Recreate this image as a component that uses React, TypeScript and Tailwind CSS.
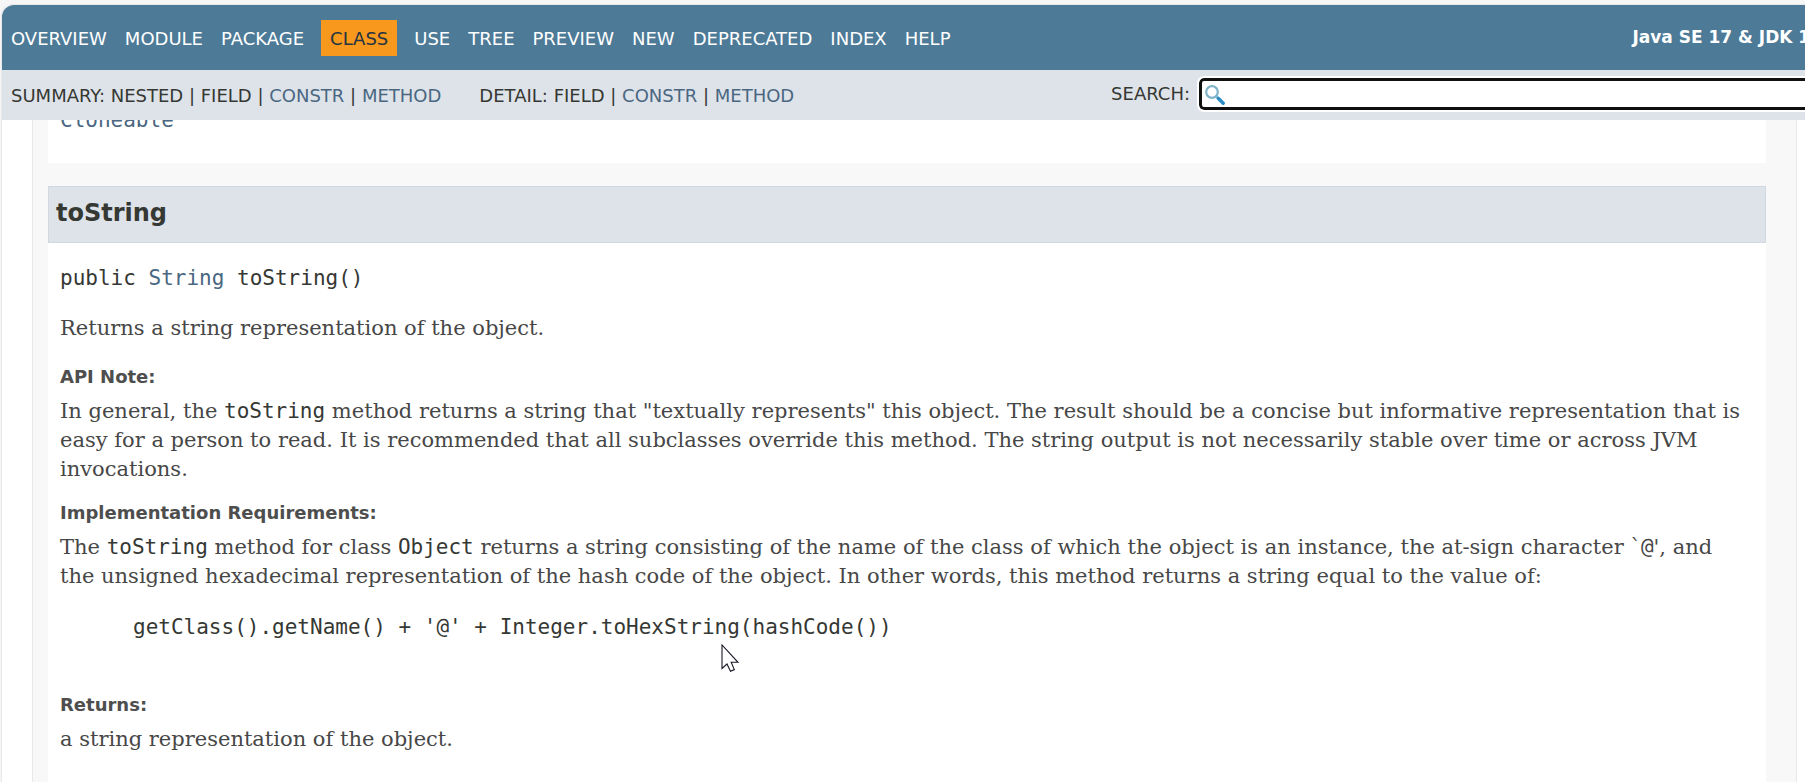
import type { ReactNode } from "react";

const SANS = "font-['DejaVu_Sans',sans-serif]";
const SERIF = "font-['DejaVu_Serif',serif]";
const MONO = "font-['DejaVu_Sans_Mono',monospace]";

const NAV_BEFORE = ["Overview", "Module", "Package"];
const NAV_AFTER = ["Use", "Tree", "Preview", "New", "Deprecated", "Index", "Help"];

function NavLink({ children }: { children: string }) {
  return (
    <li>
      <a href="#" className="text-white uppercase">
        {children}
      </a>
    </li>
  );
}

function TopNav() {
  return (
    <nav
      aria-label="Main"
      className="flex h-[65px] items-center justify-between rounded-tl-xl bg-[#4d7a97] pl-[9px] text-white"
    >
      <ul className="flex items-end gap-[18px] text-[18px] leading-[34px]">
        {NAV_BEFORE.map((item) => (
          <NavLink key={item}>{item}</NavLink>
        ))}
        <li className="-mx-px bg-[#f8981d] px-[9px] pt-[2px] text-[#253441] uppercase">Class</li>
        {NAV_AFTER.map((item) => (
          <NavLink key={item}>{item}</NavLink>
        ))}
      </ul>
      <strong className="pr-[23px] pb-[2px] text-[17px] leading-[20px] font-bold whitespace-nowrap">
        Java SE 17 &amp; JDK 17
      </strong>
    </nav>
  );
}

function MemberLinks({ label, nested }: { label: string; nested?: boolean }) {
  return (
    <p className="whitespace-nowrap uppercase">
      {label}: {nested && "Nested | "}Field |{" "}
      <a href="#" className="text-[#4a6782]">
        Constr
      </a>{" "}
      |{" "}
      <a href="#" className="text-[#4a6782]">
        Method
      </a>
    </p>
  );
}

function SearchIcon() {
  return (
    <svg viewBox="0 0 20 20" className="absolute top-[9px] left-2 size-5" aria-hidden="true">
      <circle cx="7" cy="7" r="5.8" fill="#fff" stroke="#7fb4cb" strokeWidth="2.2" />
      <path d="M12 12l2 2" stroke="#5aa0c4" strokeWidth="2" />
      <path d="M13.2 13.2l5 5" stroke="#2a8cc4" strokeWidth="3.4" strokeLinecap="round" />
    </svg>
  );
}

function SubNav() {
  return (
    <div className="flex h-[50px] items-center justify-between bg-[#dee3e9] pl-[9px] text-[18px] leading-[24px] text-[#353833]">
      <div className="flex gap-[38px] pt-[2px]">
        <MemberLinks label="Summary" nested />
        <MemberLinks label="Detail" />
      </div>
      <div className="flex items-center gap-[7px] pb-[2px]">
        <label htmlFor="search" className="uppercase">
          Search:
        </label>
        <div className="relative">
          <input
            id="search"
            type="text"
            className="block h-[36px] w-[648px] rounded-[7px] border-2 border-white bg-white pl-8 text-[18px] ring-[3px] ring-[#101010] outline-none ring-inset"
          />
          <SearchIcon />
        </div>
      </div>
    </div>
  );
}

function Code({ children }: { children: ReactNode }) {
  return <code className={`${MONO} text-[#353833]`}>{children}</code>;
}

function Term({ children }: { children: string }) {
  return <dt className={`${SANS} text-[18px] leading-[20px] font-bold text-[#4e4e4e]`}>{children}</dt>;
}

function MethodDetail() {
  return (
    <section className="mt-[23px] flex-1 bg-white">
      <h3
        className={`${SANS} border border-[#d0d9e0] bg-[#dee3e9] px-[7px] pt-[11px] pb-[13px] text-[24px] leading-[31px] font-bold text-[#353833]`}
      >
        toString
      </h3>
      <div className="pr-5 pl-3 text-[21px] leading-[29px]">
        <div className={`${MONO} mt-[21px] text-[#353833]`}>
          public{" "}
          <a href="#" className="text-[#4a6782]">
            String
          </a>{" "}
          toString()
        </div>
        <p className="mt-[21px]">Returns a string representation of the object.</p>
        <dl>
          <div className="mt-6">
            <Term>API Note:</Term>
            <dd className="mt-[10px]">
              In general, the <Code>toString</Code> method returns a string that "textually represents" this object.
              The result should be a concise but informative representation that is easy for a person to read. It is
              recommended that all subclasses override this method. The string output is not necessarily stable over
              time or across JVM invocations.
            </dd>
          </div>
          <div className="mt-[19px]">
            <Term>Implementation Requirements:</Term>
            <dd className="mt-[10px]">
              The <Code>toString</Code> method for class <Code>Object</Code> returns a string consisting of the name of
              the class of which the object is an instance, the at-sign character `<span className={MONO}>@</span>', and
              the unsigned hexadecimal representation of the hash code of the object. In other words, this method
              returns a string equal to the value of:
              <pre className={`${MONO} mt-[22px] ml-[73px] text-[#353833]`}>
                getClass().getName() + '@' + Integer.toHexString(hashCode())
              </pre>
            </dd>
          </div>
          <div className="mt-[53px]">
            <Term>Returns:</Term>
            <dd className="mt-[10px]">a string representation of the object.</dd>
          </div>
        </dl>
      </div>
    </section>
  );
}

function Pointer() {
  return (
    <svg viewBox="0 0 19 29" className="pointer-events-none absolute top-[644px] left-[721px] h-[29px] w-[19px]" aria-hidden="true">
      <path
        d="M1 1V24.5L6 20L9.5 27.2L13.3 25.6L10.2 18.3H17Z"
        fill="#fff"
        stroke="#1c1726"
        strokeWidth="1.1"
      />
    </svg>
  );
}

export default function App() {
  return (
    <div className={`${SERIF} relative flex h-screen flex-col overflow-hidden bg-[#f6f6f6] pt-1 pl-px text-[#474747]`}>
      <div className="flex min-h-0 flex-1 flex-col rounded-tl-xl border-t border-l border-[#e8e8e8] bg-white">
        <header className={`${SANS} -mr-10 shrink-0`}>
          <TopNav />
          <SubNav />
        </header>
        <main className="mr-2 ml-[30px] flex min-h-0 flex-1 flex-col overflow-hidden border-x border-[#e8e8e8] bg-[#f8f8f8] pr-[30px] pl-[15px]">
          <section className="-mt-[14px] bg-white px-3 pb-[28px]">
            <a href="#" className={`${MONO} block text-[21px] leading-[29px] text-[#4a6782]`}>
              Cloneable
            </a>
          </section>
          <MethodDetail />
        </main>
      </div>
      <Pointer />
    </div>
  );
}
